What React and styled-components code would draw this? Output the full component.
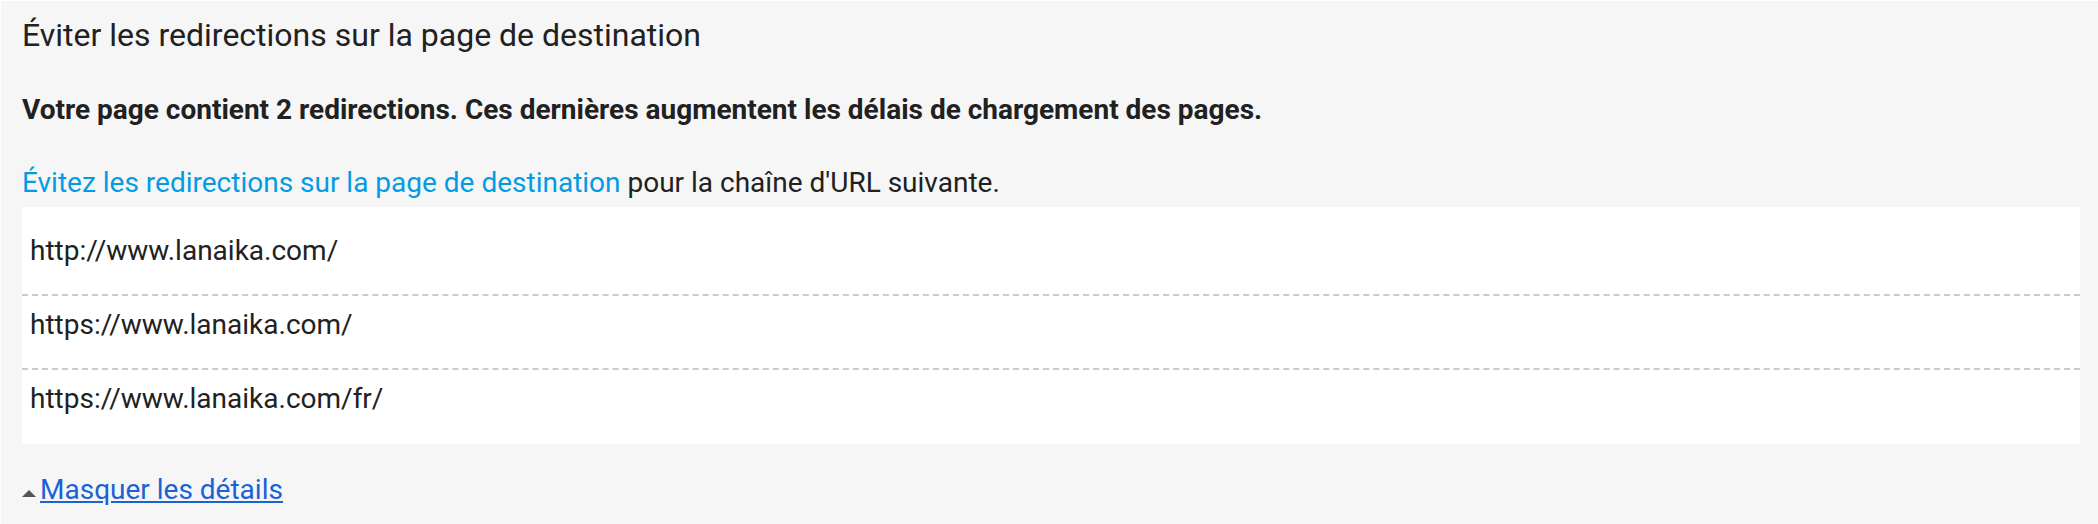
import styled, { createGlobalStyle } from 'styled-components';

const GlobalStyle = createGlobalStyle`
  html, body {
    margin: 0;
    background: #fff;
  }
  body {
    font-family: Roboto, "Noto Sans", Arial, sans-serif;
    color: #212121;
  }
`;

const Panel = styled.section`
  margin: 1px 0 0 1px;
  min-height: 523px;
  box-sizing: border-box;
  background: #f6f6f6;
  padding: 14px 18px 0 21px;
`;

const Title = styled.h3`
  margin: 0;
  font-size: 32px;
  font-weight: 400;
  line-height: 40px;
  color: #212121;
`;

const Summary = styled.p`
  margin: 37px 0 0;
  font-size: 28px;
  font-weight: 700;
  line-height: 36px;
`;

const Intro = styled.p`
  margin: 37px 0 6px;
  font-size: 28px;
  line-height: 36px;
`;

const DocLink = styled.a`
  color: #039be5;
  text-decoration: none;
`;

const UrlList = styled.ul`
  list-style: none;
  margin: 0;
  padding: 15px 0 0;
  background: #fff;
`;

const UrlRow = styled.li`
  padding: 11px 8px 25px;
  font-size: 28px;
  line-height: 36px;
  border-bottom: 2px dashed #cccccc;

  &:last-child {
    border-bottom: none;
    padding-bottom: 27px;
  }
`;

const Toggle = styled.a`
  display: inline-flex;
  align-items: center;
  margin-top: 28px;
  font-size: 28px;
  line-height: 36px;
  color: #1a62d6;
  cursor: pointer;

  span {
    text-decoration: underline;
  }
`;

const Arrow = styled.i`
  width: 0;
  height: 0;
  margin-right: 4px;
  margin-top: 6px;
  border-left: 7px solid transparent;
  border-right: 7px solid transparent;
  border-bottom: 7px solid #555;
`;

const urls = [
  'http://www.lanaika.com/',
  'https://www.lanaika.com/',
  'https://www.lanaika.com/fr/',
];

const App = () => (
  <>
    <GlobalStyle />
    <Panel>
      <Title>Éviter les redirections sur la page de destination</Title>
      <Summary>
        Votre page contient 2 redirections. Ces dernières augmentent les délais de chargement des pages.
      </Summary>
      <Intro>
        <DocLink href="#">Évitez les redirections sur la page de destination</DocLink> pour la chaîne d'URL suivante.
      </Intro>
      <UrlList>
        {urls.map((url) => (
          <UrlRow key={url}>{url}</UrlRow>
        ))}
      </UrlList>
      <Toggle>
        <Arrow />
        <span>Masquer les détails</span>
      </Toggle>
    </Panel>
  </>
);

export default App;
